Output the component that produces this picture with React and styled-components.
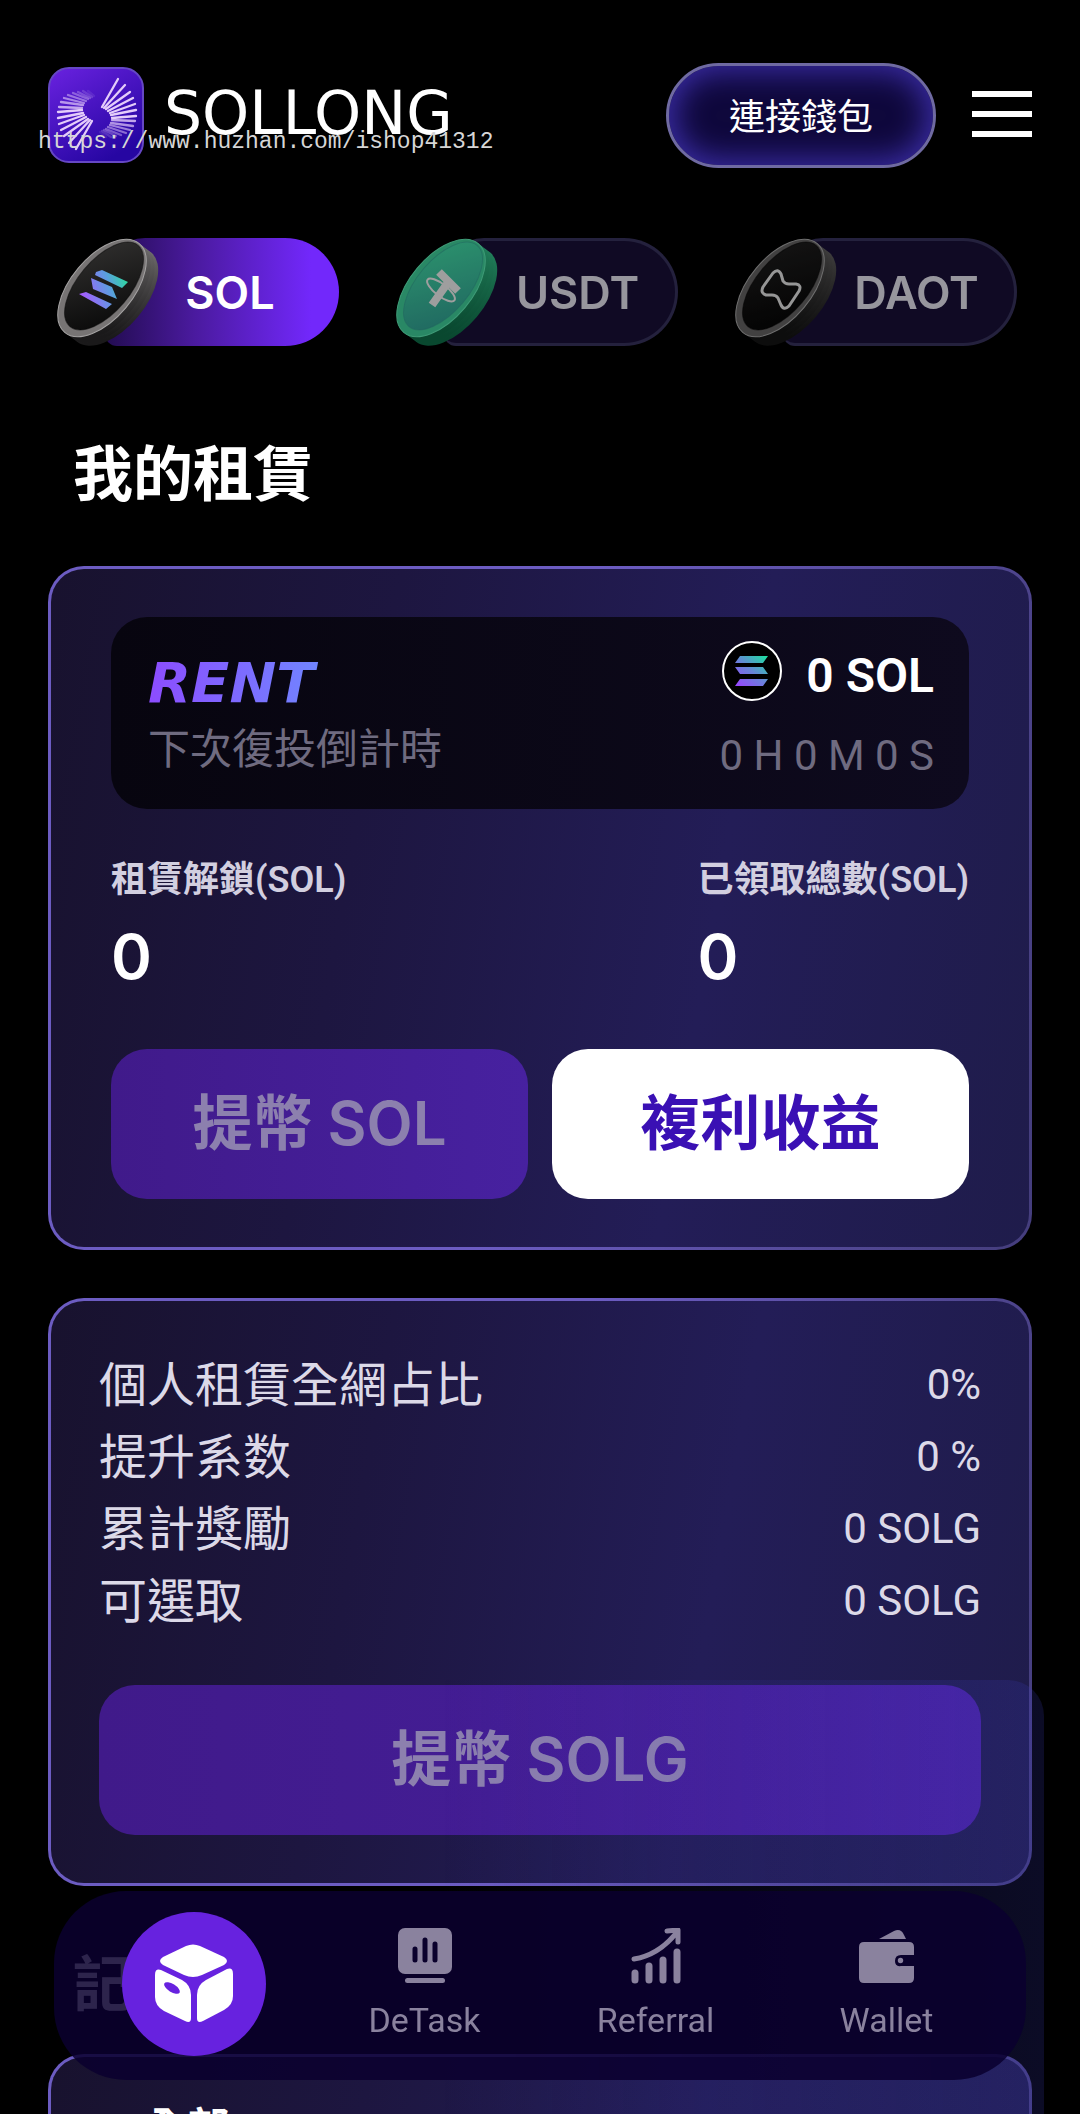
import React, { useState } from "react";
import styled, { createGlobalStyle, css } from "styled-components";

const uiFont = `Inter, "Noto Sans CJK TC", sans-serif`;
const tightFont = `Roboto, "Noto Sans CJK TC", sans-serif`;

const GlobalStyle = createGlobalStyle`
  * { box-sizing: border-box; }
  body { margin: 0; background: #000; }
  button { font: inherit; border: 0; padding: 0; cursor: pointer; }
  h1, h2, dl, dt, dd, p { margin: 0; font-weight: inherit; }
`;

const Shell = styled.div`
  height: 100vh;
  overflow-x: hidden;
  overflow-y: auto;
  scrollbar-width: none;
  background: #000;
  color: #fff;
  font-family: ${uiFont};
`;

const Page = styled.main`
  display: flex;
  flex-direction: column;
  padding: 63px 48px 240px;
`;

const Header = styled.header`
  position: relative;
  display: flex;
  align-items: center;
  justify-content: space-between;
  height: 105px;
`;

const Brand = styled.a`
  display: flex;
  align-items: center;
  gap: 20px;
  padding-bottom: 2px;
  color: #fff;
  text-decoration: none;
`;

const BrandName = styled.span`
  padding-bottom: 4px;
  font: 400 60px/60px "DejaVu Sans", sans-serif;
`;

const Watermark = styled.span`
  position: absolute;
  left: -10px;
  top: 64px;
  font: 400 23px/30px "Liberation Mono", monospace;
  color: #d6d6d6;
  pointer-events: none;
`;

const HeaderActions = styled.div`
  display: flex;
  align-items: center;
  gap: 36px;
`;

const ConnectButton = styled.button`
  width: 270px;
  height: 105px;
  padding-bottom: 4px;
  border: 3px solid #6f6aa2;
  border-radius: 53px;
  background: #0f083c;
  box-shadow: inset 0 0 30px 6px #3a2ca4;
  color: #fff;
  font-size: 36px;
`;

const MenuButton = styled.button`
  display: flex;
  flex-direction: column;
  gap: 14px;
  width: 60px;
  padding-bottom: 4px;
  background: none;
`;

const MenuBar = styled.span`
  width: 100%;
  height: 6px;
  background: #fff;
`;

const Tabs = styled.div`
  display: grid;
  grid-template-columns: repeat(3, 1fr);
  gap: 57px;
  padding: 0 15px 0 9px;
  margin-top: 70px;
`;

const Tab = styled.button`
  display: flex;
  height: 108px;
  background: none;
  color: ${(p) => (p.$active ? "#fff" : "#d2d0da")};
  opacity: ${(p) => (p.$active ? 1 : 0.72)};
`;

const TabPill = styled.span`
  flex: 1;
  display: flex;
  align-items: center;
  justify-content: center;
  height: 100%;
  margin-left: 48px;
  border-radius: 40px 54px 54px 12px;
  font-size: 45px;
  font-weight: 600;
  ${(p) =>
    p.$active
      ? css`
          padding-left: 16px;
          background: linear-gradient(90deg, #220c50, #4a1a9e 38%, #7228fb 88%);
        `
      : css`
          padding-left: 36px;
          background: #170f33;
          border: 3px solid #332e55;
          border-left: 0;
        `}
`;

const CoinSlot = styled.span`
  width: 104px;
  height: 110px;
  margin-right: -104px;
  z-index: 1;
`;

const Heading = styled.h1`
  padding-left: 25px;
  margin-top: ${(p) => p.$top}px;
  font-size: 60px;
  line-height: 72px;
  font-weight: 700;
`;

const Card = styled.section`
  margin-top: ${(p) => p.$top}px;
  padding: 48px ${(p) => p.$inset}px;
  border: 3px solid transparent;
  border-radius: 36px;
  background:
    linear-gradient(100deg, #18122e, #1d1640 32%, #231d57 66%, #1f1c4b) padding-box,
    linear-gradient(100deg, #6c5cc2 50%, #443d7c) border-box;
`;

const RentPanel = styled.div`
  display: flex;
  align-items: center;
  justify-content: space-between;
  height: 192px;
  padding: 6px 35px 0 37px;
  border-radius: 36px;
  background: linear-gradient(90deg, #07050f, #0e0a1e);
`;

const RentTitle = styled.h2`
  width: max-content;
  padding-right: 6px;
  font: italic 700 56px/66px "DejaVu Sans", sans-serif;
  background: linear-gradient(90deg, #8c4cff, #7086ff);
  background-clip: text;
  color: transparent;
`;

const Countdown = styled.p`
  font-size: 42px;
  line-height: 66px;
  font-weight: 400;
  color: #6f6b80;
`;

const RentSide = styled.div`
  display: flex;
  flex-direction: column;
  align-items: flex-end;
  font-family: ${tightFont};
`;

const Balance = styled.p`
  display: flex;
  align-items: center;
  gap: 24px;
  font-size: 48px;
  line-height: 80px;
  font-weight: 600;

  svg {
    margin-bottom: 10px;
  }
`;

const Timer = styled.p`
  font-size: 42px;
  line-height: 80px;
  font-weight: 400;
  color: #6f6b80;
`;

const Stats = styled.dl`
  display: flex;
  justify-content: space-between;
  margin-top: 47px;
`;

const StatLabel = styled.dt`
  font-family: ${tightFont};
  font-size: 36px;
  line-height: 48px;
  font-weight: 600;
  color: #d2cfe0;
`;

const StatValue = styled.dd`
  margin-top: 17px;
  font-size: 62px;
  line-height: 72px;
  font-weight: 600;
`;

const Actions = styled.div`
  display: grid;
  grid-auto-flow: column;
  grid-auto-columns: 1fr;
  gap: 24px;
  margin-top: ${(p) => p.$top}px;
`;

const ActionButton = styled.button`
  height: 150px;
  padding-bottom: 12px;
  border-radius: 36px;
  font-size: 60px;
  font-weight: 600;
  background: ${(p) => (p.$light ? "#fff" : "linear-gradient(90deg, #401a8a, #4721a0)")};
  color: ${(p) => (p.$light ? "#3a10b4" : "#8c80ae")};
`;

const Rows = styled.dl`
  display: flex;
  flex-direction: column;
`;

const Row = styled.div`
  display: flex;
  justify-content: space-between;
  line-height: 72px;
  color: #dcd9e8;
`;

const RowLabel = styled.dt`
  font-size: 48px;
`;

const RowValue = styled.dd`
  font-family: ${tightFont};
  font-size: 42px;
`;

const RecordTitle = styled.p`
  padding-left: 46px;
  font-size: 42px;
  line-height: 46px;
  font-weight: 700;
`;

const Dock = styled.div`
  position: fixed;
  left: 36px;
  right: 36px;
  bottom: 0;
  padding: 211px 18px 34px;
  border-radius: 36px 36px 0 0;
  background: linear-gradient(90deg, rgba(70, 70, 190, 0) 40%, rgba(60, 60, 190, 0.2));
`;

const Nav = styled.nav`
  display: grid;
  grid-template-columns: repeat(4, 1fr);
  align-items: center;
  height: 189px;
  padding: 0 24px 3px;
  border-radius: 72px;
  background: rgba(10, 0, 46, 0.86);
`;

const NavLink = styled.a`
  display: flex;
  flex-direction: column;
  align-items: center;
  gap: 16px;
  color: #8a829e;
  font-family: ${tightFont};
  font-size: 34px;
  line-height: 40px;
  text-decoration: none;
`;

const NavHome = styled.a`
  display: grid;
  place-items: center;
  justify-self: center;
  width: 144px;
  height: 144px;
  border-radius: 50%;
  background: #6722df;
`;

const rays = [
  [70, 12, 54, 40], [77, 18, 56, 41], [82, 25, 58, 42], [85, 31, 60, 44],
  [87, 37, 62, 46], [88, 43, 63, 48], [88, 49, 64, 51], [87, 54, 64, 53],
  [85, 59, 63, 56], [82, 63, 62, 58], [78, 66, 60, 60], [73, 68, 58, 62],
  [68, 69, 56, 63], [63, 70, 54, 64], [58, 70, 52, 65],
];

function Fan({ flip }) {
  return (
    <g transform={flip ? "rotate(180 49 47)" : undefined}>
      {rays.map(([x1, y1, x2, y2], i) => (
        <line key={i} x1={x1} y1={y1} x2={x2} y2={y2} opacity={i < 7 ? 1 : 0.9 - (i - 6) * 0.1} />
      ))}
    </g>
  );
}

function LogoMark() {
  return (
    <svg width="96" height="96" viewBox="0 0 96 96" aria-hidden="true">
      <defs>
        <linearGradient id="mark" x1="0" y1="0" x2="0.6" y2="1">
          <stop offset="0" stopColor="#6a22e0" />
          <stop offset="1" stopColor="#2606a2" />
        </linearGradient>
      </defs>
      <rect x="1" y="1" width="94" height="94" rx="20" fill="url(#mark)" stroke="#6547c4" strokeWidth="2" />
      <g stroke="#e4ccfa" strokeWidth="2.3" strokeLinecap="round">
        <Fan />
        <Fan flip />
      </g>
    </svg>
  );
}

const coinColors = {
  SOL: { edge: "#858282", edgeEnd: "#1a191a", rim: "#777474", line: "#a4a2a2", face: "#343332", faceEnd: "#050505" },
  USDT: { edge: "#38c48e", edgeEnd: "#0d6442", rim: "#3abd8c", line: "#56d6a4", face: "#3fd09a", faceEnd: "#2b8a84" },
  DAOT: { edge: "#6a6868", edgeEnd: "#121212", rim: "#5c5a5a", line: "#999", face: "#1f1e1e", faceEnd: "#020202" },
};

function Coin({ name }) {
  const c = coinColors[name];
  return (
    <svg width="104" height="110" viewBox="0 0 104 110" aria-hidden="true">
      <defs>
        <linearGradient id={`edge${name}`} gradientUnits="userSpaceOnUse" x1="98" y1="20" x2="34" y2="104">
          <stop offset="0" stopColor={c.edge} />
          <stop offset="0.9" stopColor={c.edgeEnd} />
        </linearGradient>
        <linearGradient id={`face${name}`} gradientUnits="userSpaceOnUse" x1="80" y1="5" x2="20" y2="95">
          <stop offset="0" stopColor={c.face} />
          <stop offset="1" stopColor={c.faceEnd} />
        </linearGradient>
        <linearGradient id="coinSol" gradientUnits="userSpaceOnUse" x1="24" y1="56" x2="70" y2="42">
          <stop offset="0" stopColor="#a65cff" />
          <stop offset="0.6" stopColor="#5c9ce0" />
          <stop offset="1" stopColor="#2ed8a2" />
        </linearGradient>
      </defs>
      <g fill={`url(#edge${name})`}>
        <ellipse cx="57" cy="59" rx="58" ry="31" transform="rotate(-50 57 59)" />
        <ellipse cx="53" cy="56" rx="58" ry="32" transform="rotate(-50 53 56)" />
        <ellipse cx="49" cy="53" rx="58" ry="32" transform="rotate(-50 49 53)" />
      </g>
      <ellipse cx="45" cy="50" rx="58" ry="31" transform="rotate(-50 45 50)" fill={c.rim} stroke={c.line} />
      <ellipse cx="47" cy="48" rx="53" ry="26" transform="rotate(-50 47 48)" fill={`url(#face${name})`} stroke={c.faceEnd} strokeOpacity="0.5" />
      {name === "SOL" && (
        <path fill="url(#coinSol)" d="M39 34l6-2 26 12-6 6-27-13zM34 40l21 9 5 12-24-10zM22 56l7-2 26 12-6 5z" />
      )}
      {name === "USDT" && (
        <g fill="none" stroke="#dcdcdc">
          <path strokeWidth="8" d="M43 34L62 53M53 43L36 67" />
          <ellipse cx="45" cy="52" rx="17" ry="6" transform="rotate(38 45 52)" strokeWidth="2" />
        </g>
      )}
      {name === "DAOT" && (
        <path
          fill="none"
          stroke="#d0d0d0"
          strokeWidth="3"
          strokeLinejoin="round"
          d="M38 35Q43 30 46 36L48 43Q50 46 54 46L61 46Q67 47 64 53L54 68Q49 73 46 67L43 60Q41 57 37 57L31 57Q25 55 28 49Z"
        />
      )}
    </svg>
  );
}

function SolBadge() {
  return (
    <svg width="60" height="60" viewBox="0 0 60 60" aria-hidden="true">
      <defs>
        <linearGradient id="badge" gradientUnits="userSpaceOnUse" x1="16" y1="46" x2="42" y2="14">
          <stop offset="0" stopColor="#9945ff" />
          <stop offset="0.5" stopColor="#6884d8" />
          <stop offset="1" stopColor="#20dca0" />
        </linearGradient>
      </defs>
      <circle cx="30" cy="30" r="29" fill="#000" stroke="#fff" strokeWidth="2" />
      <path fill="url(#badge)" d="M18 15h28l-5 7H13zM13 26h28l5 7H18zM18 38h28l-5 7H13z" />
    </svg>
  );
}

function CubeIcon() {
  return (
    <svg width="78" height="80" viewBox="0 0 78 80" aria-hidden="true">
      <g fill="#fff">
        <path d="M31 2Q38-1 45 2L69 13Q75 17 69 21L47 31Q38 35 29 31L8 21Q2 17 8 13Z" />
        <path d="M0 31Q0 24 6 26L27 36Q36 41 36 51V74Q36 80 30 77L9 67Q0 62 0 53Z" />
        <path d="M78 30Q78 23 72 25L51 36Q42 41 42 51V74Q42 80 48 77L69 66Q78 61 78 52Z" />
      </g>
      <ellipse cx="17" cy="44" rx="9" ry="4" transform="rotate(32 17 44)" fill="#6722df" />
    </svg>
  );
}

function TaskIcon() {
  return (
    <svg width="54" height="56" viewBox="0 0 54 56" aria-hidden="true">
      <rect width="54" height="46" rx="7" fill="currentColor" />
      <rect x="7" y="50" width="40" height="5" rx="2.5" fill="currentColor" />
      <path d="M17 21V32M27 12V32M37 16V32" stroke="#0a002c" strokeWidth="5" strokeLinecap="round" />
    </svg>
  );
}

function ReferralIcon() {
  return (
    <svg width="50" height="56" viewBox="0 0 50 56" aria-hidden="true">
      <g fill="none" stroke="currentColor" strokeLinecap="round" strokeLinejoin="round">
        <path strokeWidth="7" d="M4 45V52M18 38V52M32 32V52M46 24V52" />
        <path strokeWidth="5" d="M3 31Q28 27 46 4M36 3L47 2V14" />
      </g>
    </svg>
  );
}

function WalletIcon() {
  return (
    <svg width="56" height="56" viewBox="0 0 56 56" aria-hidden="true">
      <g fill="currentColor">
        <path d="M20 11L35 3Q42 0 45 7L47 11Z" />
        <path d="M5 14H50Q55 14 55 19V27H42Q36 27 36 33T42 38H55V50Q55 55 50 55H5Q0 55 0 50V19Q0 14 5 14Z" />
        <circle cx="41.5" cy="32.5" r="2.7" />
      </g>
    </svg>
  );
}

const coins = ["SOL", "USDT", "DAOT"];
const rentalRows = [
  ["個人租賃全網占比", "0%"],
  ["提升系数", "0 %"],
  ["累計獎勵", "0 SOLG"],
  ["可選取", "0 SOLG"],
];
const navItems = [
  ["DeTask", TaskIcon],
  ["Referral", ReferralIcon],
  ["Wallet", WalletIcon],
];

export default function App() {
  const [coin, setCoin] = useState("SOL");
  return (
    <Shell>
      <GlobalStyle />
      <Page>
        <Header>
          <Brand href="#home">
            <LogoMark />
            <BrandName>SOLLONG</BrandName>
          </Brand>
          <HeaderActions>
            <ConnectButton>連接錢包</ConnectButton>
            <MenuButton aria-label="Menu">
              <MenuBar />
              <MenuBar />
              <MenuBar />
            </MenuButton>
          </HeaderActions>
          <Watermark>https://www.huzhan.com/ishop41312</Watermark>
        </Header>

        <Tabs>
          {coins.map((name) => (
            <Tab key={name} $active={name === coin} aria-pressed={name === coin} onClick={() => setCoin(name)}>
              <CoinSlot>
                <Coin name={name} />
              </CoinSlot>
              <TabPill $active={name === coin}>{name}</TabPill>
            </Tab>
          ))}
        </Tabs>

        <Heading $top={92}>我的租賃</Heading>
        <Card $top={56} $inset={60}>
          <RentPanel>
            <div>
              <RentTitle>RENT</RentTitle>
              <Countdown>下次復投倒計時</Countdown>
            </div>
            <RentSide>
              <Balance>
                <SolBadge />
                <span>0 SOL</span>
              </Balance>
              <Timer>0 H 0 M 0 S</Timer>
            </RentSide>
          </RentPanel>
          <Stats>
            <div>
              <StatLabel>租賃解鎖(SOL)</StatLabel>
              <StatValue>0</StatValue>
            </div>
            <div>
              <StatLabel>已領取總數(SOL)</StatLabel>
              <StatValue>0</StatValue>
            </div>
          </Stats>
          <Actions $top={56}>
            <ActionButton>提幣 SOL</ActionButton>
            <ActionButton $light>複利收益</ActionButton>
          </Actions>
        </Card>

        <Card $top={48} $inset={48}>
          <Rows>
            {rentalRows.map(([label, value]) => (
              <Row key={label}>
                <RowLabel>{label}</RowLabel>
                <RowValue>{value}</RowValue>
              </Row>
            ))}
          </Rows>
          <Actions $top={48}>
            <ActionButton>提幣 SOLG</ActionButton>
          </Actions>
        </Card>

        <Heading as="h2" $top={62}>記錄</Heading>
        <Card $top={34} $inset={48}>
          <RecordTitle>全部</RecordTitle>
        </Card>
      </Page>

      <Dock>
        <Nav>
          <NavHome href="#home" aria-label="Home">
            <CubeIcon />
          </NavHome>
          {navItems.map(([label, Icon]) => (
            <NavLink key={label} href={`#${label.toLowerCase()}`}>
              <Icon />
              {label}
            </NavLink>
          ))}
        </Nav>
      </Dock>
    </Shell>
  );
}
